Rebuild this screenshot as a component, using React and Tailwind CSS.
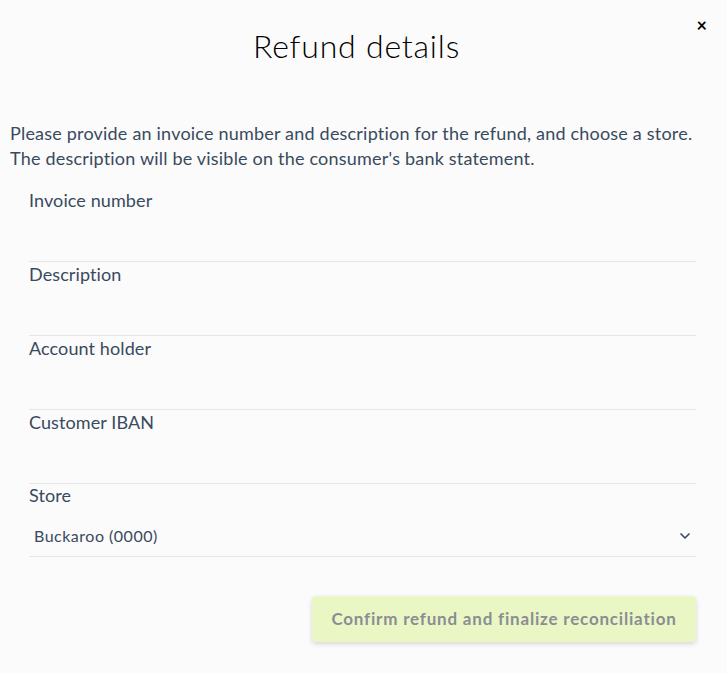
import { ChevronDown } from "lucide-react";

const fields = ["Invoice number", "Description", "Account holder", "Customer IBAN"];

export default function App() {
  return (
    <div className="min-h-screen bg-[#fbfbfb] font-['Lato',sans-serif] text-[#394a5e]">
      <div className="relative w-[727px] h-[673px] px-[10px]">
        <button className="absolute right-[20px] top-[16px] text-[18px] font-bold text-black leading-none">
          ×
        </button>

        <h2 className="pt-[26px] pr-[14px] text-center text-[32px] font-light tracking-[0.8px] text-black leading-[40px]">
          Refund details
        </h2>

        <p className="mt-[55px] text-[18px] tracking-[0.2px] leading-[25px]">
          Please provide an invoice number and description for the refund, and choose a store.
          <br />
          The description will be visible on the consumer's bank statement.
        </p>

        <div className="ml-[19px] mr-[21px] mt-[17px]">
          {fields.map((f) => (
            <div key={f} className="h-[74px] border-b border-[#e4e6e8]">
              <label className="block pt-[1px] text-[18px] tracking-[0.1px] leading-[22px]">{f}</label>
            </div>
          ))}

          <div className="border-b border-[#e4e6e8]">
            <label className="block text-[18px] tracking-[0.1px] leading-[22px]">Store</label>
            <div className="flex items-center justify-between h-[50px] pt-[10px] pl-[5px] pr-[3px]">
              <span className="text-[16px] tracking-[0.5px]">Buckaroo (0000)</span>
              <ChevronDown className="w-[16px] h-[16px]" strokeWidth={2.5} />
            </div>
          </div>

          <div className="flex justify-end mt-[39px]">
            <button className="w-[384px] h-[46px] rounded-[4px] bg-[#eaf7c4] text-[#8a8e92] text-[17px] font-bold tracking-[0.8px] shadow-[0_2px_5px_rgba(0,0,0,0.15)]">
              Confirm refund and finalize reconciliation
            </button>
          </div>
        </div>
      </div>
    </div>
  );
}
